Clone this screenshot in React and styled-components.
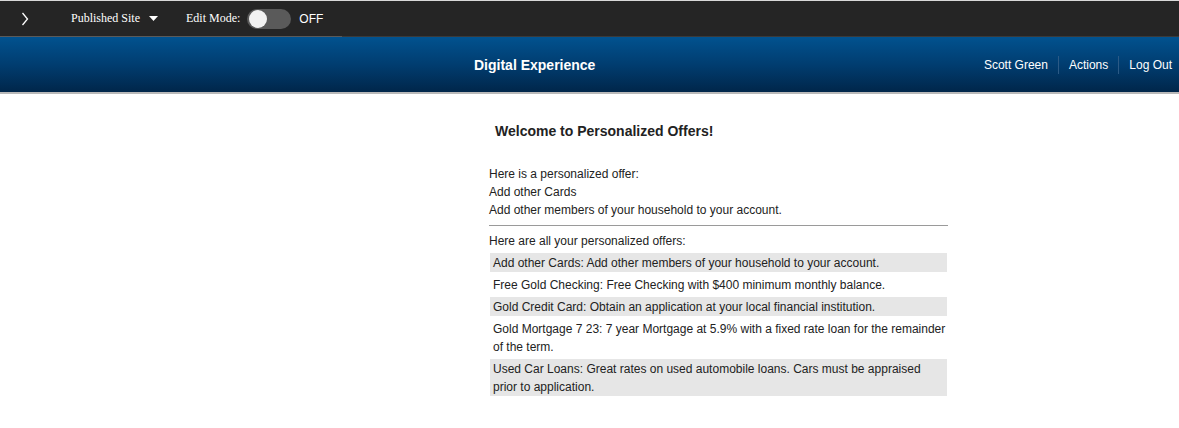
import React from 'react';
import styled, { createGlobalStyle } from 'styled-components';

const GlobalStyle = createGlobalStyle`
  body {
    margin: 0;
    background: #fff;
    font-family: 'Liberation Sans', Arial, sans-serif;
  }
`;

const TopBar = styled.div`
  position: relative;
  display: flex;
  align-items: center;
  box-sizing: border-box;
  height: 37px;
  background: #252525;
  border-top: 1px solid #d9d9d9;
  border-bottom: 1px solid #3a3a3a;
  color: #fff;
  font-family: 'Liberation Serif', 'Times New Roman', serif;
  font-size: 12px;

  .edge {
    position: absolute;
    left: 0;
    bottom: -1px;
    width: 342px;
    height: 1px;
    background: #5a5a5a;
  }
`;

const Chevron = styled.span`
  display: flex;
  width: 17px;
  margin-left: 21px;
  margin-right: 33px;
`;

const SiteMenu = styled.span`
  display: flex;
  align-items: center;
  gap: 9px;
  margin-right: 28px;
`;

const Toggle = styled.span`
  position: relative;
  display: inline-block;
  width: 44px;
  height: 20px;
  border-radius: 10px;
  background: #5a5a5a;
  margin: 0 8px 0 7px;

  &::after {
    content: '';
    position: absolute;
    left: 2px;
    top: 1px;
    width: 18px;
    height: 18px;
    border-radius: 50%;
    background: #f2f2f2;
  }
`;

const ToggleLabel = styled.span`
  font-family: 'Liberation Sans', Arial, sans-serif;
  font-size: 12px;
`;

const Header = styled.header`
  display: flex;
  align-items: center;
  height: 55px;
  background: linear-gradient(to bottom, #01528f 0%, #013d70 50%, #00264a 100%);
  border-bottom: 2px solid #b9b9b9;
  color: #fff;
  font-size: 12px;
`;

const Brand = styled.div`
  margin-left: 474px;
  font-size: 14px;
  font-weight: bold;
  flex: 1;
`;

const Nav = styled.nav`
  display: flex;
  align-items: center;
  margin-right: 7px;
`;

const NavItem = styled.a`
  color: #fff;
  text-decoration: none;
  padding: 0 ${(p) => (p.last ? '0' : '10px')} 0 ${(p) => (p.first ? '0' : '10px')};
  line-height: 18px;
  border-left: 1px solid ${(p) => (p.first ? 'transparent' : '#2b5a86')};
`;

const Content = styled.main`
  width: 459px;
  margin-left: 489px;
  padding-top: 29px;
  color: #222;
  font-size: 12px;
  line-height: 18px;
`;

const Title = styled.h2`
  margin: 0 0 26px 6px;
  font-size: 14px;
  line-height: 16px;
  font-weight: bold;
`;

const Line = styled.div``;

const Divider = styled.hr`
  margin: 6px 0 6px;
  border: 0;
  border-top: 1px solid #9a9a9a;
`;

const Offers = styled.div`
  display: flex;
  flex-direction: column;
  gap: 3px;
  margin-top: 3px;
`;

const Offer = styled.div`
  margin: 0 1px;
  padding: 1px 0 0 3px;
  background: ${(p) => (p.shaded ? '#e6e6e6' : 'transparent')};
`;

const offers = [
  'Add other Cards: Add other members of your household to your account.',
  'Free Gold Checking: Free Checking with $400 minimum monthly balance.',
  'Gold Credit Card: Obtain an application at your local financial institution.',
  'Gold Mortgage 7 23: 7 year Mortgage at 5.9% with a fixed rate loan for the remainder of the term.',
  'Used Car Loans: Great rates on used automobile loans. Cars must be appraised prior to application.',
];

export default function App() {
  return (
    <>
      <GlobalStyle />
      <TopBar>
        <Chevron>
          <svg width='8' height='14' viewBox='0 0 8 14'>
            <path d='M1.5 1 L6.5 7 L1.5 13' fill='none' stroke='#fff' strokeWidth='1.3' />
          </svg>
        </Chevron>
        <SiteMenu>
          Published Site
          <svg width='9' height='5' viewBox='0 0 9 5'>
            <path d='M0 0 H9 L4.5 5 Z' fill='#fff' />
          </svg>
        </SiteMenu>
        <span>Edit Mode:</span>
        <Toggle />
        <ToggleLabel>OFF</ToggleLabel>
        <span className='edge' />
      </TopBar>

      <Header>
        <Brand>Digital Experience</Brand>
        <Nav>
          <NavItem first>Scott Green</NavItem>
          <NavItem>Actions</NavItem>
          <NavItem last>Log Out</NavItem>
        </Nav>
      </Header>

      <Content>
        <Title>Welcome to Personalized Offers!</Title>
        <Line>Here is a personalized offer:</Line>
        <Line>Add other Cards</Line>
        <Line>Add other members of your household to your account.</Line>
        <Divider />
        <Line>Here are all your personalized offers:</Line>
        <Offers>
          {offers.map((text, i) => (
            <Offer key={i} shaded={i % 2 === 0}>
              {text}
            </Offer>
          ))}
        </Offers>
      </Content>
    </>
  );
}
